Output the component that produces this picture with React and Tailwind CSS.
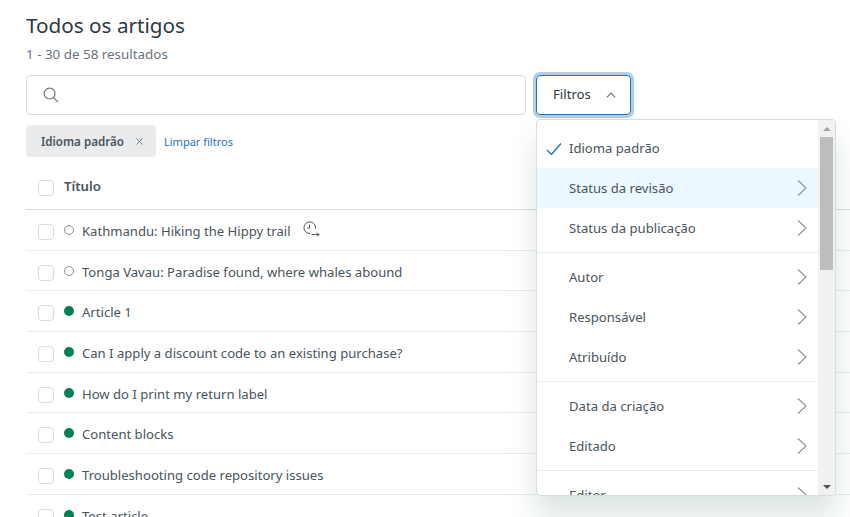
import React from "react";

const Chevron = () => (
  <svg width="12" height="18" viewBox="0 0 12 18" fill="none" stroke="#87929d" strokeWidth="1.1" className="shrink-0">
    <path d="M2 1.5 L10 9 L2 16.5" />
  </svg>
);

const rows = [
  { t: "Kathmandu: Hiking the Hippy trail", live: false, clock: true },
  { t: "Tonga Vavau: Paradise found, where whales abound", live: false },
  { t: "Article 1", live: true },
  { t: "Can I apply a discount code to an existing purchase?", live: true },
  { t: "How do I print my return label", live: true },
  { t: "Content blocks", live: true },
  { t: "Troubleshooting code repository issues", live: true },
  { t: "Test article", live: true },
];

const Item = ({ label, hover, check, arrow = true }) => (
  <div className={`h-10 flex items-center pl-8 pr-[10px] relative text-[13.1px] text-[#49545c] ${hover ? "bg-[#edf7ff]" : ""}`}>
    {check && (
      <svg width="16" height="14" viewBox="0 0 16 14" fill="none" stroke="#1f73b7" strokeWidth="1.3" className="absolute left-[9px] top-[14px]">
        <path d="M1 8 L5.5 12.5 L15 1.5" />
      </svg>
    )}
    <span className="flex-1 pt-[2px]">{label}</span>
    {arrow && <Chevron />}
  </div>
);

const Sep = () => <div className="border-t border-[#e9ebed] my-[4px]" />;

export default function App() {
  return (
    <div className="relative w-[850px] h-[517px] overflow-hidden bg-white font-['Noto_Sans','Open_Sans',sans-serif] text-[#2f3941]">
      <div className="pl-[26px]">
        <h1 className="pt-[10px] text-[20.7px] leading-[30px] font-normal">Todos os artigos</h1>
        <p className="mt-[4px] text-[13.4px] leading-5 text-[#68737d]">1 - 30 de 58 resultados</p>
        <div className="mt-[11px] flex items-center gap-[10px]">
          <div className="w-[500px] h-10 border border-[#d8dcde] rounded flex items-center pl-[16px]">
            <svg width="16" height="16" viewBox="0 0 17 17" fill="none" stroke="#68737d" strokeWidth="1.2">
              <circle cx="7" cy="7" r="5.8" />
              <path d="M11.2 11.2 L16 16" />
            </svg>
          </div>
          <div className="w-[95px] h-10 border border-[#1f73b7] rounded ring-[3px] ring-[#1f73b7]/35 flex items-center pl-[16px] gap-[15px] text-[13.2px]">
            <span>Filtros</span>
            <svg width="10" height="6" viewBox="0 0 10 6" fill="none" stroke="#68737d" strokeWidth="1.2">
              <path d="M0.8 5.4 L5 1 L9.2 5.4" />
            </svg>
          </div>
        </div>
        <div className="mt-[10px] flex items-center gap-2">
          <div className="w-[130px] h-8 rounded bg-[#e9ebed] flex items-center pl-[15px] gap-[12px] text-[11.6px] font-semibold text-[#49545c]">
            <span className="pt-[2px]">Idioma padrão</span>
            <svg width="7" height="7" viewBox="0 0 8 8" stroke="#68737d" strokeWidth="1">
              <path d="M0.5 0.5 L7.5 7.5 M7.5 0.5 L0.5 7.5" />
            </svg>
          </div>
          <span className="text-[11px] text-[#1f73b7] mt-[3px]">Limpar filtros</span>
        </div>
        <div className="mt-[10px] h-[43px] border-b border-[#d8dcde] flex items-start gap-[10px] pl-3 pt-[9px]">
          <div className="mt-[4px] w-4 h-4 border border-[#d8dcde] rounded" />
          <span className="text-[13.2px] font-semibold leading-5 text-[#49545c]">Título</span>
        </div>
        {rows.map((r) => (
          <div key={r.t} className="h-[40.7px] border-b border-[#e9ebed] flex items-center pl-3 text-[13.1px] text-[#49545c]">
            <div className="w-4 h-4 border border-[#d8dcde] rounded mt-[4px] shrink-0" />
            <div className={`ml-[10px] w-[10px] h-[10px] rounded-full shrink-0 ${r.live ? "bg-[#038153]" : "border border-[#87929d]"}`} />
            <span className="ml-[8px] mt-[4px]">{r.t}</span>
            {r.clock && (
              <svg width="17" height="17" viewBox="0 0 17 17" fill="none" stroke="#49545c" strokeWidth="1" className="ml-[12px]">
                <path d="M7 12.5 A5.8 5.8 0 1 1 12.5 7.5" />
                <path d="M6.5 3.5 V7 H4" />
                <path d="M8.5 13.5 H16 M14 11.5 L16 13.5 L14 15.5" />
              </svg>
            )}
          </div>
        ))}
      </div>

      <div className="absolute left-[536px] top-[119px] w-[300px] h-[377px] bg-white border border-[#d8dcde] rounded shadow-[0_20px_28px_0_rgba(23,73,77,0.15)] overflow-hidden flex">
        <div className="flex-1 min-w-0 pt-[8px]">
          <Item label="Idioma padrão" check arrow={false} />
          <Item label="Status da revisão" hover />
          <Item label="Status da publicação" />
          <Sep />
          <Item label="Autor" />
          <Item label="Responsável" />
          <Item label="Atribuído" />
          <Sep />
          <Item label="Data da criação" />
          <Item label="Editado" />
          <Sep />
          <Item label="Editor" />
        </div>
        <div className="w-[17px] shrink-0 bg-[#f1f1f1] flex flex-col items-center">
          <div className="h-[17px] flex items-center justify-center">
            <div className="border-x-[4px] border-x-transparent border-b-[4px] border-b-[#a3a3a3]" />
          </div>
          <div className="w-[13px] h-[133px] bg-[#bdbdbd]" />
          <div className="flex-1" />
          <div className="h-[17px] flex items-center justify-center">
            <div className="border-x-[4px] border-x-transparent border-t-[4px] border-t-[#505050]" />
          </div>
        </div>
      </div>
    </div>
  );
}
